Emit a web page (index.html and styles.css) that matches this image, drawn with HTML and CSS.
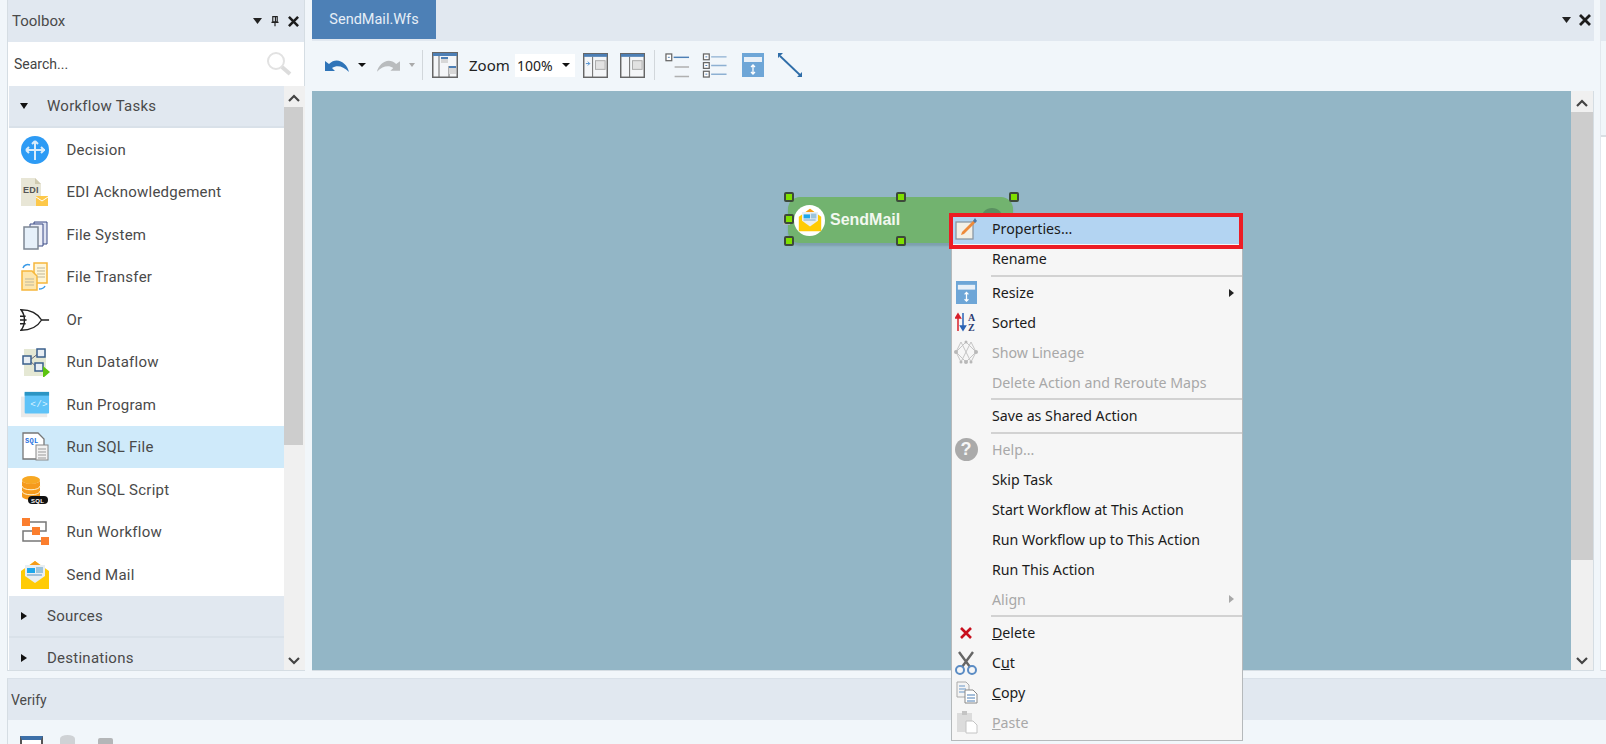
FILE: index.html
```html
<!DOCTYPE html>
<html lang="en">
<head>
<meta charset="utf-8">
<title>SendMail.Wfs</title>
<link rel="stylesheet" href="styles.css">
</head>
<body>
<div class="app">
  <div class="top">
    <aside class="toolbox">
      <header class="pane-title">
        <span class="pane-name">Toolbox</span>
        <span class="pane-ctrls">
          <svg width="9" height="6" viewBox="0 0 9 6"><path d="M0 0h9L4.500 6z" fill="#222"/></svg>
          <svg width="8" height="12" viewBox="0 0 9 12"><path d="M2 1h5v6H2zM0.500 7.500h8M4.500 8v4M5 1.500v5" fill="none" stroke="#222" stroke-width="1.300"/></svg>
          <svg width="11" height="11" viewBox="0 0 12 12"><path d="M1 1l10 10M11 1L1 11" stroke="#1c1c1c" stroke-width="2.800"/></svg>
        </span>
      </header>
      <div class="search">
        <span>Search...</span>
        <svg width="26" height="26" viewBox="0 0 26 26"><circle cx="10" cy="10" r="8" fill="#fff" stroke="#e2e2e2" stroke-width="2"/><path d="M16 16l8 7" stroke="#dcdcdc" stroke-width="4"/></svg>
      </div>
      <div class="tree">
        <div class="tree-list">
          <div class="group"><i class="tri-down"></i>Workflow Tasks</div>
          <div class="item">
            <svg class="ico" width="30" height="30" viewBox="0 0 30 30"><circle cx="15" cy="15" r="14" fill="#2d9bf5"/><path d="M15 6v19M6 15h19M15 6l-3 3M15 6l3 3M6 15l3-3M6 15l3 3M24 15l-3-3M24 15l-3 3" fill="none" stroke="#d9ecfb" stroke-width="2"/></svg>
            Decision</div>
          <div class="item">
            <svg class="ico" width="30" height="30" viewBox="0 0 30 30"><path d="M1 1h14l6 6v22H1z" fill="#e8e6d6"/><path d="M15 1l6 6h-6z" fill="#cfcab0"/><rect x="16" y="19" width="12" height="10" fill="#fdc849"/><path d="M16 20l6 4 6-4" fill="none" stroke="#fff" stroke-width="1"/><text x="3" y="16" class="mini-text">EDI</text></svg>
            EDI Acknowledgement</div>
          <div class="item">
            <svg class="ico" width="30" height="30" viewBox="0 0 30 30"><path d="M14 2h13v22H14z" fill="#dfe3f2" stroke="#3a4a86"/><path d="M10 4h13v22H10z" fill="#eef0f8" stroke="#3a4a86"/><path d="M4 7h14v22H4z" fill="#e6f0fa" stroke="#7d8794" stroke-width="1.500"/></svg>
            File System</div>
          <div class="item">
            <svg class="ico" width="30" height="30" viewBox="0 0 30 30"><path d="M14 1h13v20H14z" fill="#fff6d8" stroke="#f6b73c" stroke-width="1.500"/><path d="M2 9h10l5 5v14H2z" fill="#fde6ad" stroke="#f6b73c" stroke-width="1.500"/><path d="M17 6h8M17 9h8M17 12h8M17 15h8M5 17h9M5 20h9M5 23h9" stroke="#bfb79b"/><path d="M3 6c1-3 4-4 7-3M19 27c3 0 5-1 6-3" fill="none" stroke="#3b9be8" stroke-width="1.500"/></svg>
            File Transfer</div>
          <div class="item">
            <svg class="ico" width="32" height="30" viewBox="0 0 32 30"><path d="M1 4c6 0 16 1 22 11C17 25 7 26 1 26c5-6 5-16 0-22z" fill="#fff" stroke="#222" stroke-width="1.500"/><path d="M23 15h8M0 11h6M0 15h7M0 19h6" stroke="#222" stroke-width="1.500"/></svg>
            Or</div>
          <div class="item">
            <svg class="ico" width="30" height="30" viewBox="0 0 30 30"><rect x="4" y="2" width="22" height="27" fill="#e5e8d4"/><path d="M10 13l9-7M10 14l9 8" stroke="#667" fill="none"/><rect x="3" y="9" width="8" height="8" fill="#e8eef4" stroke="#3a5f8c" stroke-width="1.500"/><rect x="17" y="2" width="8" height="8" fill="#e8eef4" stroke="#3a5f8c" stroke-width="1.500"/><rect x="15" y="16" width="8" height="8" fill="#e8eef4" stroke="#3a5f8c" stroke-width="1.500"/><path d="M23 19l7 6-7 6z" fill="#5cc40e"/></svg>
            Run Dataflow</div>
          <div class="item">
            <svg class="ico" width="32" height="30" viewBox="0 0 32 30"><rect x="1" y="6" width="28" height="22" fill="#eaeaea"/><rect x="5" y="1" width="26" height="23" rx="1" fill="#5fc3f8"/><rect x="5" y="1" width="26" height="4" fill="#2b95c4"/><text x="11" y="17" class="code-text">&lt;/&gt;</text></svg>
            Run Program</div>
          <div class="item is-selected">
            <svg class="ico" width="30" height="30" viewBox="0 0 30 30"><path d="M3 1h15l6 6v20H3z" fill="#fff" stroke="#777" stroke-width="1.300"/><text x="5" y="11" class="sql-text">SQL</text><rect x="16" y="13" width="12" height="15" fill="#f2f2f2" stroke="#888"/><path d="M18 17h8M18 20h8M18 23h8M18 26h8" stroke="#999"/></svg>
            Run SQL File</div>
          <div class="item">
            <svg class="ico" width="30" height="30" viewBox="0 0 30 30"><ellipse cx="11" cy="5" rx="9" ry="4" fill="#f7a823"/><path d="M2 5v16c0 5 18 5 18 0V5c0 5-18 5-18 0z" fill="#f59a1c"/><path d="M2 11c0 5 18 5 18 0M2 16c0 5 18 5 18 0" stroke="#fff3d0" fill="none"/><rect x="8" y="21" width="20" height="8" rx="4" fill="#111"/><text x="11" y="28" class="pill-text">SQL</text></svg>
            Run SQL Script</div>
          <div class="item">
            <svg class="ico" width="30" height="30" viewBox="0 0 30 30"><path d="M9 5h17v9H9M26 14M9 14H3v10h18M19 14" fill="none" stroke="#777" stroke-width="1.500"/><rect x="2" y="1" width="8" height="8" fill="#fb7e2e"/><rect x="12" y="10" width="8" height="8" fill="#fb7e2e"/><rect x="21" y="20" width="8" height="8" fill="#fb7e2e"/></svg>
            Run Workflow</div>
          <div class="item">
            <svg class="ico" width="30" height="30" viewBox="0 0 30 30"><use href="#mail"/></svg>
            Send Mail</div>
          <div class="group"><i class="tri-right"></i>Sources</div>
          <div class="group group-last"><i class="tri-right"></i>Destinations</div>
        </div>
        <div class="vscroll toolbox-scroll">
          <svg class="arrow" width="12" height="8" viewBox="0 0 12 8"><path d="M1 7l5-5 5 5" fill="none" stroke="#444" stroke-width="2.200"/></svg>
          <div class="track"><div class="thumb"></div></div>
          <svg class="arrow" width="12" height="8" viewBox="0 0 12 8"><path d="M1 1l5 5 5-5" fill="none" stroke="#444" stroke-width="2.200"/></svg>
        </div>
      </div>
    </aside>

    <main class="doc">
      <header class="doc-title">
        <div class="tab">SendMail.Wfs</div>
        <span class="pane-ctrls doc-ctrls">
          <svg width="9" height="6" viewBox="0 0 9 6"><path d="M0 0h9L4.500 6z" fill="#222"/></svg>
          <svg width="12" height="12" viewBox="0 0 12 12"><path d="M1 1l10 10M11 1L1 11" stroke="#1c1c1c" stroke-width="2.800"/></svg>
        </span>
      </header>
      <div class="toolbar">
        <svg class="t-undo" width="25" height="15" viewBox="0 0 25 15"><path d="M0 3v10h10L7 10c5-3 11-2 17 4C22 5 12-2 4 6z" fill="#2f74b8"/></svg>
        <i class="caret t-caret"></i>
        <svg class="t-redo" width="24" height="15" viewBox="0 0 25 15"><path d="M25 3v10H15l3-3C13 7 7 8 1 14 3 5 13-2 21 6z" fill="#b9bcbe"/></svg>
        <i class="caret caret-off t-caret2"></i>
        <span class="sep t-sep"></span>
        <svg class="t-layout" width="26" height="26" viewBox="0 0 26 26"><rect x=".75" y=".75" width="24.500" height="24.500" fill="#f4f6f8" stroke="#666" stroke-width="1.500"/><rect x="1" y="1" width="24" height="3" fill="#4d7fb5"/><path d="M7 4v21M17 14v11" stroke="#666"/><rect x="9" y="5" width="7" height="6" fill="#d7d7d7"/><rect x="9" y="5" width="7" height="2" fill="#4d7fb5"/><rect x="17" y="14" width="7" height="8" fill="#d7d7d7"/><rect x="17" y="14" width="7" height="2" fill="#4d7fb5"/></svg>
        <span class="zoom-label">Zoom</span>
        <div class="combo"><span>100%</span><i class="caret"></i></div>
        <svg class="t-a" width="25" height="25" viewBox="0 0 26 26"><rect x=".75" y=".75" width="24.500" height="24.500" fill="#f4f6f8" stroke="#666" stroke-width="1.500"/><rect x="1" y="1" width="24" height="3" fill="#4d7fb5"/><path d="M10 4v21" stroke="#666"/><path d="M3 11h4M5 9l2 2-2 2" stroke="#4d8fd0" fill="none"/><rect x="13" y="8" width="10" height="9" fill="#e2e2e2" stroke="#aaa"/></svg>
        <svg class="t-b" width="25" height="25" viewBox="0 0 26 26"><rect x=".75" y=".75" width="24.500" height="24.500" fill="#f4f6f8" stroke="#666" stroke-width="1.500"/><rect x="1" y="1" width="24" height="3" fill="#4d7fb5"/><path d="M10 4v21" stroke="#666"/><rect x="13" y="8" width="10" height="9" fill="#e2e2e2" stroke="#aaa"/></svg>
        <span class="sep t-sep2"></span>
        <svg class="t-c" width="25" height="25" viewBox="0 0 26 26"><rect x="1" y="1" width="6" height="7" fill="#fff" stroke="#666" stroke-width="1.300"/><path d="M3 4.500h2" stroke="#4d7fb5"/><path d="M9 4.500h16" stroke="#4d7fb5" stroke-width="1.500"/><path d="M10 14.500h15M10 24.500h15" stroke="#b0b0b0" stroke-width="1.500"/></svg>
        <svg class="t-d" width="26" height="25" viewBox="0 0 26 26"><rect x="1" y="1" width="6" height="6" fill="#fff" stroke="#666" stroke-width="1.300"/><rect x="1" y="10" width="6" height="6" fill="#fff" stroke="#666" stroke-width="1.300"/><rect x="1" y="19" width="6" height="6" fill="#fff" stroke="#666" stroke-width="1.300"/><path d="M3 4h2M3 13h2M3 22h2" stroke="#4d7fb5"/><path d="M9 4h16M9 13h16M9 22h16" stroke="#8db0d2" stroke-width="1.500"/></svg>
        <svg class="t-e" width="22" height="24" viewBox="0 0 22 24"><use href="#resize"/></svg>
        <svg class="t-f" width="26" height="26" viewBox="0 0 26 26"><path d="M3 4l20 19" stroke="#2f6da8" stroke-width="1.800"/><path d="M1 1h5L1 6zM25 25h-5l5-5z" fill="#2f6da8"/></svg>
      </div>
      <div class="doc-body">
        <div class="canvas">
          <div class="node">
            <span class="node-icon"><svg width="24" height="24" viewBox="0 0 30 30"><use href="#mail"/></svg></span>
            <span class="node-label">SendMail</span>
            <span class="node-dot"></span>
          </div>
          <i class="port"></i>
          <i class="handle h1"></i><i class="handle h2"></i><i class="handle h3"></i>
          <i class="handle h4"></i><i class="handle h5"></i><i class="handle h6"></i>
        </div>
        <div class="vscroll doc-scroll">
          <svg class="arrow" width="12" height="8" viewBox="0 0 12 8"><path d="M1 7l5-5 5 5" fill="none" stroke="#444" stroke-width="2.200"/></svg>
          <div class="track"><div class="thumb"></div></div>
          <svg class="arrow" width="12" height="8" viewBox="0 0 12 8"><path d="M1 1l5 5 5-5" fill="none" stroke="#444" stroke-width="2.200"/></svg>
        </div>
      </div>
    </main>
    <div class="sliver"><div class="sliver-top"></div><div class="sliver-mid"></div><div class="sliver-body"></div></div>
  </div>

  <section class="verify">
    <header class="verify-title">Verify</header>
    <div class="verify-tools">
      <span class="v-win"></span><span class="v-db"></span><span class="v-box"></span>
    </div>
  </section>

  <nav class="menu">
    <div class="mi mi-active"><span class="mi-ico"><svg width="24" height="24" viewBox="0 0 24 24"><rect x="2" y="5" width="17" height="17" fill="#f2efe6" stroke="#8a97a3" stroke-width="1.300"/><path d="M8 15L20 3l2 2L10 17l-3 1z" fill="#ee8a3a"/><path d="M19 4l2-3 2 3-2 2z" fill="#4a77a8"/></svg></span>Properties...</div>
    <div class="mi"><span class="mi-ico"></span>Rename</div>
    <div class="msep"></div>
    <div class="mi"><span class="mi-ico"><svg width="23" height="23" viewBox="0 0 22 24"><use href="#resize"/></svg></span>Resize<i class="sub"></i></div>
    <div class="mi"><span class="mi-ico"><svg width="22" height="20" viewBox="0 0 22 20"><path d="M3 19V3M3 2L0.500 6h5z" stroke="#d8202a" stroke-width="1.500" fill="#d8202a"/><path d="M8 1v16M8 18l-2.500-4h5z" stroke="#2a63b5" stroke-width="1.500" fill="#2a63b5"/><text x="13" y="9" class="az-text">A</text><text x="13" y="19" class="az-text">Z</text></svg></span>Sorted</div>
    <div class="mi is-off"><span class="mi-ico"><svg width="26" height="24" viewBox="0 0 26 24"><path d="M8 2L3 12l5 10M18 2l5 10-5 10M8 2l10 20M18 2L8 22M13 2L3 12l10 10 10-10z" fill="none" stroke="#c4c4c4"/><g fill="#b8b8b8"><circle cx="3" cy="12" r="2"/><circle cx="23" cy="12" r="2"/><circle cx="13" cy="22" r="2"/><circle cx="8" cy="22" r="1.500"/><circle cx="18" cy="22" r="1.500"/><circle cx="13" cy="2" r="1.500"/></g></svg></span>Show Lineage</div>
    <div class="mi is-off"><span class="mi-ico"></span>Delete Action and Reroute Maps</div>
    <div class="msep"></div>
    <div class="mi"><span class="mi-ico"></span>Save as Shared Action</div>
    <div class="msep"></div>
    <div class="mi is-off"><span class="mi-ico"><span class="help">?</span></span>Help...</div>
    <div class="mi"><span class="mi-ico"></span>Skip Task</div>
    <div class="mi"><span class="mi-ico"></span>Start Workflow at This Action</div>
    <div class="mi"><span class="mi-ico"></span>Run Workflow up to This Action</div>
    <div class="mi"><span class="mi-ico"></span>Run This Action</div>
    <div class="mi is-off"><span class="mi-ico"></span>Align<i class="sub sub-off"></i></div>
    <div class="msep"></div>
    <div class="mi"><span class="mi-ico"><svg width="12" height="12" viewBox="0 0 12 12"><path d="M1 1l10 10M11 1L1 11" stroke="#c8101e" stroke-width="2.600"/></svg></span><span><u>D</u>elete</span></div>
    <div class="mi"><span class="mi-ico"><svg width="24" height="24" viewBox="0 0 24 24"><path d="M5 1l11 15M19 1L8 16" stroke="#666" stroke-width="2.400"/><circle cx="6" cy="19" r="4" fill="none" stroke="#5b8cc4" stroke-width="2"/><circle cx="18" cy="19" r="4" fill="none" stroke="#5b8cc4" stroke-width="2"/></svg></span><span>C<u>u</u>t</span></div>
    <div class="mi"><span class="mi-ico"><svg width="23" height="23" viewBox="0 0 23 23"><path d="M2 1h9l3 3v12H2z" fill="#f4f4f4" stroke="#aaa"/><path d="M4 5h6M4 8h7M4 11h7" stroke="#6a97c8"/><path d="M10 9h8l4 4v9H10z" fill="#fff" stroke="#888"/><path d="M12 14h8M12 17h8M12 20h8" stroke="#4d7fb5"/></svg></span><span><u>C</u>opy</span></div>
    <div class="mi is-off"><span class="mi-ico"><svg width="23" height="24" viewBox="0 0 23 24"><rect x="2" y="3" width="15" height="19" fill="#dcdcdc"/><rect x="7" y="1" width="5" height="4" fill="#c4c4c4"/><path d="M11 11h7l4 4v8H11z" fill="#fff" stroke="#c4c4c4"/></svg></span><span><u>P</u>aste</span></div>
  </nav>
  <div class="menu-focus"></div>
</div>

<svg class="defs" width="0" height="0" aria-hidden="true">
  <defs>
    <symbol id="mail" viewBox="0 0 30 30">
      <path d="M1 11L15 1l14 10v18H1z" fill="#ffcb05"/>
      <path d="M15 1l5 4H10z" fill="#f59a1c"/>
      <path d="M5 5h20v11l-10 7-10-7z" fill="#e9eef2"/>
      <rect x="7" y="8" width="8" height="5" fill="#1ea7ea"/>
      <rect x="16" y="7" width="7" height="6" fill="#9cc4dc"/>
      <path d="M7 15h15" stroke="#5a94c4"/>
    </symbol>
    <symbol id="resize" viewBox="0 0 22 24">
      <rect width="22" height="24" fill="#6ea6d7"/>
      <rect x="2" y="4" width="18" height="5" fill="#e8f0f8"/>
      <path d="M11 12v9M9 14l2-2 2 2M9 19l2 2 2-2" fill="none" stroke="#fff" stroke-width="1.300"/>
    </symbol>
  </defs>
</svg>
</body>
</html>
```
FILE: styles.css
```css
* { box-sizing: border-box; }
html, body { margin: 0; height: 100%; }
body {
  background: #f1f6fa;
  font-family: Roboto, "Liberation Sans", sans-serif;
  color: #444;
  overflow: hidden;
}
.defs { position: absolute; }
.app { position: relative; width: 1606px; height: 744px; overflow: hidden; padding-left: 7px; }
.top { display: flex; height: 671px; }

/* Toolbox pane */
.toolbox {
  width: 298px;
  display: flex;
  flex-direction: column;
  border: 1px solid #d5dde3;
  border-top-width: 0;
  background: #fff;
}
.pane-title {
  height: 42px;
  flex: none;
  display: flex;
  align-items: center;
  justify-content: space-between;
  background: #e1e8f0;
  padding: 0 5px 0 4px;
}
.pane-name { font-size: 15px; color: #4a4a4a; }
.pane-ctrls { display: flex; align-items: center; gap: 9px; }
.search {
  height: 44px;
  flex: none;
  display: flex;
  align-items: center;
  justify-content: space-between;
  padding: 0 12px 0 6px;
  font-size: 14px;
  color: #444;
}
.tree { flex: 1; display: flex; min-height: 0; }
.tree-list { width: 276px; flex: none; overflow: hidden; }
.group {
  height: 42px;
  margin-left: 1px;
  display: flex;
  align-items: center;
  background: #e1e8f0;
  border-bottom: 2px solid #d9e1e9;
  font-size: 15px;
  letter-spacing: .25px;
  color: #4a4a4a;
  padding-left: 11px;
}
.group-last { height: 32px; border-bottom: 0; padding-top: 8px; }
.tri-down, .tri-right { display: block; margin-right: 19px; flex: none; width: 0; height: 0; }
.tri-down { border-left: 4px solid transparent; border-right: 4px solid transparent; border-top: 6px solid #111; }
.tri-right { border-top: 4px solid transparent; border-bottom: 4px solid transparent; border-left: 6px solid #111; margin-left: 1px; margin-right: 20px; }
.item {
  height: 42.500px;
  display: flex;
  align-items: center;
  font-size: 15px;
  letter-spacing: .25px;
  color: #4a4a4a;
  padding: 1px 0 0 12px;
}
.ico { flex: none; margin-right: 16.500px; width: 30px; }
.is-selected { background: #cfeafa; }
.mini-text { font: bold 9px "Liberation Sans", sans-serif; fill: #555; }
.code-text { font: 10px "Liberation Mono", monospace; fill: #d8f2ff; }
.sql-text { font: bold 7px "Liberation Mono", monospace; fill: #1d6fe0; }
.pill-text { font: bold 6px "Liberation Sans", sans-serif; fill: #fff; }
.az-text { font: bold 10px "Liberation Serif", serif; fill: #2b3a70; }

.vscroll {
  flex: none;
  width: 21px;
  background: #f0f0f0;
  display: flex;
  flex-direction: column;
  align-items: center;
  padding: 0 2px 0 0;
}
.arrow { flex: none; margin: 8px 0 5px; }
.track { flex: 1; width: 100%; min-height: 0; }
.thumb { background: #cdcdcd; width: 100%; }
.toolbox-scroll .thumb { height: 338px; }
.doc-scroll .thumb { height: 448px; }

/* Document pane */
.doc { width: 1282px; margin-left: 7px; display: flex; flex-direction: column; flex: none; }
.doc-title {
  height: 41px;
  flex: none;
  background: #e1e8f0;
  display: flex;
  align-items: flex-start;
  justify-content: space-between;
  padding-right: 3px;
}
.tab {
  width: 124px;
  height: 39px;
  background: #4d80b6;
  color: #e6eef6;
  font-size: 14.500px;
  display: flex;
  align-items: center;
  justify-content: center;
}
.doc-ctrls { height: 40px; gap: 8px; }
.toolbar {
  height: 50px;
  flex: none;
  display: flex;
  align-items: center;
  background: #f1f6fa;
  padding-left: 13px;
  padding-bottom: 2px;
}
.caret { display: block; width: 0; height: 0; flex: none; border-left: 4px solid transparent; border-right: 4px solid transparent; border-top: 4px solid #111; }
.caret-off { border-top-color: #aaa; border-left-width: 3px; border-right-width: 3px; }
.sep { display: block; width: 1px; height: 30px; background: #d2d7db; flex: none; }
.t-caret { margin-left: 8px; }
.t-redo { margin-left: 10px; }
.t-caret2 { margin-left: 9px; }
.t-sep { margin-left: 7px; }
.t-layout { margin-left: 9px; }
.zoom-label { margin-left: 11px; font: 15px "Noto Sans", sans-serif; color: #222; width: 39px; }
.combo {
  margin-left: 7px;
  width: 60px;
  height: 23px;
  background: #fff;
  display: flex;
  align-items: center;
  justify-content: space-between;
  padding: 0 5px 0 2px;
  font: 14px "Noto Sans", sans-serif;
  color: #222;
}
.t-a { margin-left: 8px; }
.t-b { margin-left: 12px; }
.t-sep2 { margin-left: 9px; }
.t-c { margin-left: 10px; }
.t-d { margin-left: 12px; }
.t-e { margin-left: 14px; }
.t-f { margin-left: 13px; }
.doc-body { flex: 1; display: flex; min-height: 0; border-bottom: 1px solid #d5dde3; }
.canvas { position: relative; flex: 1; background: #93b6c6; }
.doc-scroll { width: 23px; border-right: 1px solid #d5dde3; padding-right: 0; }
.sliver { flex: 1; margin-left: 6px; display: flex; flex-direction: column; border-left: 1px solid #e2e8ee; }
.sliver-top { height: 41px; background: #e1e8f0; }
.sliver-mid { height: 96px; border-bottom: 2px solid #d9dfe4; }
.sliver-body { flex: 1; background: #fff; border-bottom: 1px solid #d5dde3; }

/* Workflow node on the canvas */
.node {
  position: absolute;
  left: 476px;
  top: 106px;
  width: 225px;
  height: 46px;
  background: #72b36f;
  border-radius: 12px;
  box-shadow: 0 3px 2px rgba(90, 120, 130, .35);
  display: flex;
  align-items: center;
  padding-left: 6px;
}
.node-icon { width: 31px; height: 31px; border-radius: 50%; background: #fff; display: flex; align-items: center; justify-content: center; }
.node-label { margin-left: 5px; font: bold 16px "Liberation Sans", sans-serif; color: #f2f8ef; }
.node-dot { position: absolute; right: 10px; top: 11px; width: 22px; height: 22px; border-radius: 50%; background: #5a9060; }
.port { position: absolute; left: 471px; top: 123px; width: 7px; height: 11px; background: #c8d5d8; border: 1px solid #aab8bc; }
.handle { position: absolute; width: 10px; height: 10px; background: #7ee000; border: 2px solid #3d4a3a; border-radius: 2px; }
.h1 { left: 472px; top: 101px; }
.h2 { left: 584px; top: 101px; }
.h3 { left: 697px; top: 101px; }
.h4 { left: 472px; top: 123px; }
.h5 { left: 472px; top: 145px; }
.h6 { left: 584px; top: 145px; }

/* Verify pane */
.verify { margin-top: 7px; height: 66px; border-top: 1px solid #d9e1e9; border-left: 1px solid #d5dde3; }
.verify-title { height: 41px; background: #e1e8f0; display: flex; align-items: center; padding-left: 3px; font-size: 14px; color: #4a4a4a; }
.verify-tools { display: flex; align-items: flex-start; padding: 16px 0 0 12px; overflow: hidden; height: 24px; }
.v-win { width: 23px; height: 20px; background: #fff; border: 2px solid #555; border-top: 4px solid #3c6fa8; }
.v-db { width: 15px; height: 20px; margin: -1px 0 0 17px; background: #cfd2d5; border-radius: 8px 8px 0 0 / 4px 4px 0 0; }
.v-box { width: 15px; height: 20px; margin: 2px 0 0 23px; background: #b4b6b8; border-radius: 2px; }

/* Context menu */
.menu {
  position: absolute;
  left: 951px;
  top: 213px;
  width: 292px;
  background: #f6f6f6;
  border: 1px solid #b5b9bb;
  font: 14.200px "Noto Sans", sans-serif;
  color: #1b1b1b;
  padding-bottom: 3px;
}
.mi { height: 29.850px; display: flex; align-items: center; position: relative; }
.mi-active { background: #b3d4f2; }
.mi-ico { width: 40px; height: 100%; flex: none; display: flex; align-items: center; justify-content: center; padding-right: 12px; }
.is-off { color: #a8a8a8; }
.msep { height: 3px; margin: 1px 0 0 39px; border-top: 2px solid #d2d2d2; }
.sub { position: absolute; right: 8px; top: 11px; width: 0; height: 0; border-top: 4px solid transparent; border-bottom: 4px solid transparent; border-left: 5px solid #222; }
.sub-off { border-left-color: #a8a8a8; }
.help { width: 23px; height: 23px; flex: none; border-radius: 50%; background: #aaa; color: #f6f6f6; font: bold 18px/23px "Liberation Sans", sans-serif; text-align: center; }
.menu-focus { position: absolute; left: 949px; top: 213px; width: 294px; height: 36px; border: 4px solid #ed1c24; }
```
